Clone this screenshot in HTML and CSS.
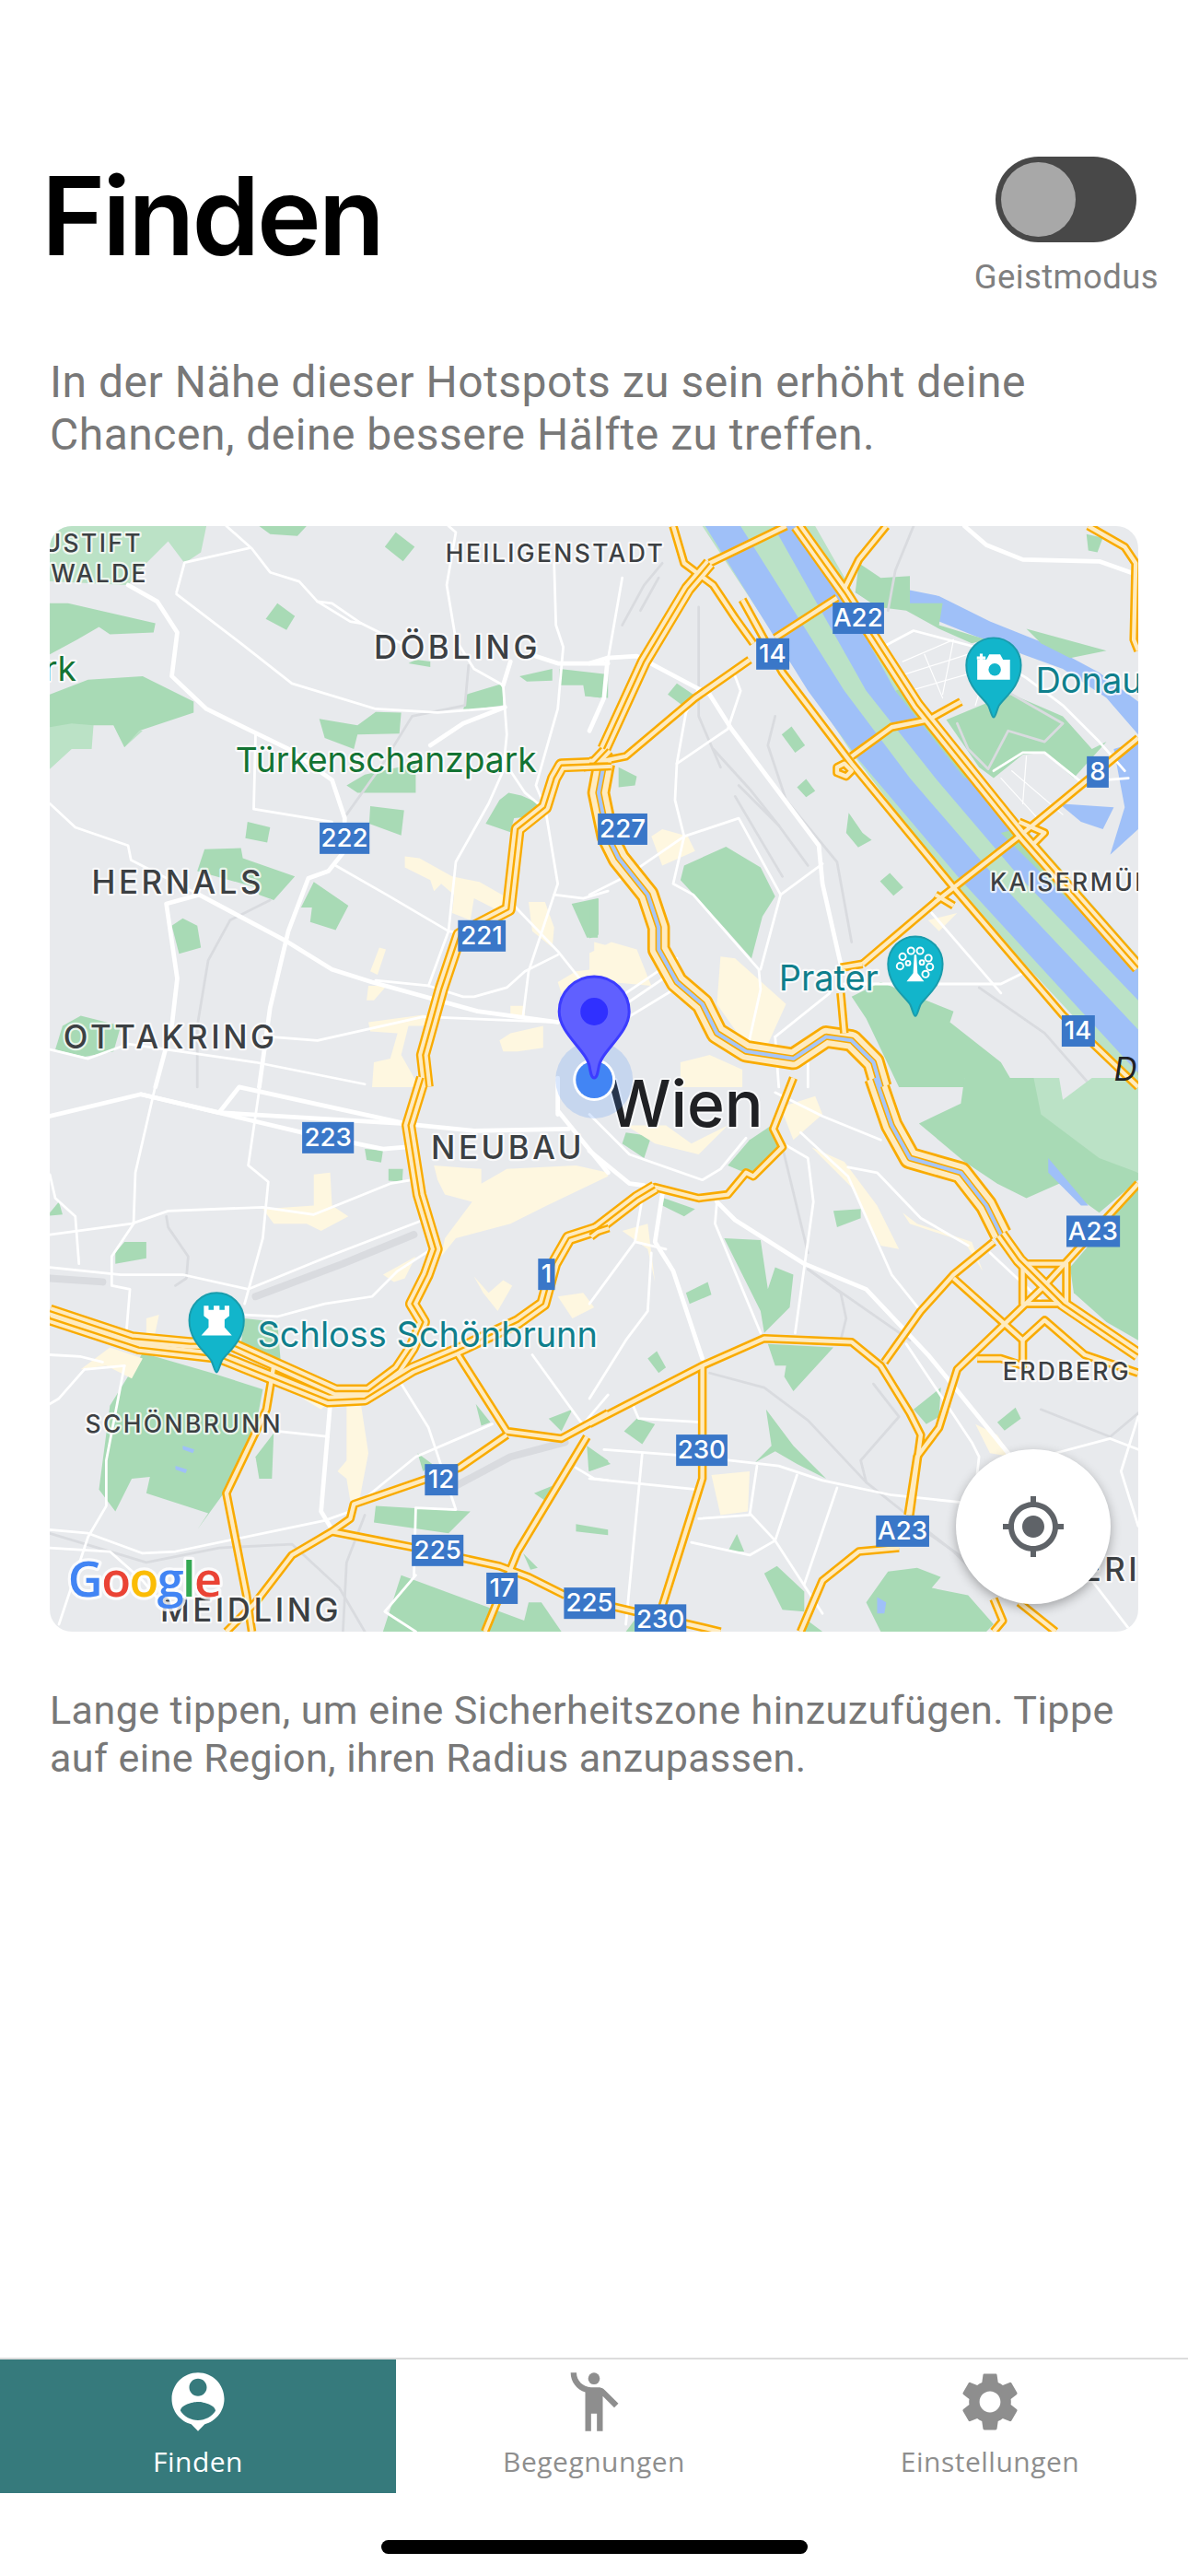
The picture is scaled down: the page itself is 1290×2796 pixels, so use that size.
FILE: index.html
```html
<!DOCTYPE html>
<html lang="de">
<head>
    <meta charset="UTF-8">
    <meta name="viewport" content="width=device-width, initial-scale=1.0">
    <title>Finden</title>
    <link rel="stylesheet" href="styles.css">
</head>
<body>
<div class="screen">
    <header class="top">
        <h1>Finden</h1>
        <div class="ghost">
            <div class="toggle"><span class="knob"></span></div>
            <span class="ghost-label">Geistmodus</span>
        </div>
    </header>
    <p class="intro">In der Nähe dieser Hotspots zu sein erhöht deine Chancen, deine bessere Hälfte zu treffen.</p>

    <div class="map">
        <svg class="map-svg" viewBox="35 28 2989 3035" width="1182" height="1200" xmlns="http://www.w3.org/2000/svg">
            <defs>
                <path id="poi" d="M0 143C-5 143-8 125-14 112C-25 92-75 60-75 0A75 75 0 1 1 75 0C75 60 25 92 14 112C8 125 5 143 0 143Z"/>
                <g id="hw-single">
                    <!-- north west -->
                    <path d="M1568 680L1500 690"/>
                    <path d="M650 2333L630 2453L520 2683L575 2963L590 3063"/>
                    <g transform="translate(1517 0)">
                        <path d="M420 230L530 430L720 680L1000 1020L1300 1370L1507 1568"/>
                        <path d="M230 28L260 130L340 190L400 280L450 350"/>
                        <path d="M0 680L100 660L290 500L440 395"/>
                        <path d="M510 335L680 225"/>
                        <path d="M700 200L740 120L815 28"/>
                        <path d="M720 660L830 580L930 560L1020 510"/>
                        <path d="M680 690L700 680L720 700L705 715L680 705Z"/>
                        <path d="M750 1230L950 1060L1180 880L1507 610"/>
                        <path d="M330 130L540 28"/>
                        <path d="M1370 28L1470 85L1500 130L1495 340L1507 370"/>
                        <path d="M690 1310L700 1420"/>
                        <path d="M690 1240L750 1230"/>
                        <path d="M950 1040L1000 1070M1180 840L1250 870L1220 900"/>
                    </g>
                    <g transform="translate(0 1543)">
                        <path d="M1510 985L1320 1300L1230 1520"/>
                        <path d="M810 1245L1040 1290L1270 1340L1350 1370L1450 1420"/>
                        <path d="M1290 980L1160 1070L870 1170L860 1210L810 1245L700 1310L600 1440L520 1520"/>
                        <path d="M1150 750L1290 970L1440 990L1568 920"/>
                    </g>
                    <g transform="translate(1517 1543)">
                        <path d="M0 950L310 790L480 715L720 725L800 790L880 920L910 980L880 1200"/>
                        <path d="M310 790L310 1100L200 1450"/>
                        <path d="M810 780L910 640L1000 540L1110 450"/>
                        <path d="M1000 550L1190 720L1250 665L1360 760L1507 810"/>
                        <path d="M1507 290L1250 570L1010 800L960 960L900 1040L875 1200"/>
                        <path d="M850 1290L740 1300L640 1380L580 1520"/>
                        <path d="M1110 1430L1135 1490L1110 1520M1180 1440L1280 1520"/>
                        <path d="M1065 770L1130 770L1190 790L1190 720"/>
                        <path d="M1190 510H1310V620H1190Z"/>
                        <path d="M60 1450L360 1520"/>
                        <path d="M0 430L130 330L180 300L300 330L380 320L430 260L450 270L530 190L505 140L560 0"/>
                    </g>
                </g>
                <g id="hw-double">
                    <path d="M1568 680L1440 685L1420 720L1395 800L1320 860L1295 1080L1160 1150L1110 1300L1060 1480L1070 1568"/>
                    <path d="M1568 640L1530 680"/>
                    <g transform="translate(1517 0)">
                        <path d="M570 28L700 210L900 520L1190 880L1507 1240"/>
                        <path d="M40 640L150 400L270 200L330 130"/>
                        <path d="M0 680L60 680"/>
                    </g>
                    <g transform="translate(0 1543)">
                        <path d="M35 640L260 715L420 730L530 730L820 860L910 860L990 800L1030 740L1060 670L1030 620L1070 540L1095 470L1050 320L1020 130L1060 0"/>
                        <path d="M35 660L280 740L500 765L800 885L900 880L1030 800L1150 750L1320 670L1390 620L1420 510L1460 440L1568 405"/>
                    </g>
                    <g transform="translate(1517 1543)">
                        <path d="M0 430L130 330L180 300"/>
                        <path d="M1130 430L1180 500L1300 620L1507 760"/>
                    </g>
                </g>
                <g id="hw-canal">
                    <g transform="translate(1517 0)">
                        <path d="M40 680L25 760L50 880L80 940L160 1040L190 1130L190 1190L240 1280L310 1340L350 1420L430 1470L560 1490L650 1430L720 1440L780 1500L800 1568"/>
                    </g>
                    <g transform="translate(1517 1543)">
                        <path d="M785 0L830 130L880 220L1020 260L1090 350L1130 430"/>
                    </g>
                </g>
            </defs>

            <rect class="land" x="35" y="28" width="2989" height="3035"/>

            <!-- north west -->
            <g>
                <g class="park-light">
                    <path d="M35 28H465L450 100L405 130L360 70L300 130L250 190L35 180Z"/>
                    <path d="M35 580L95 510L155 575L150 640L95 640L35 695Z"/>
                    <path d="M210 575L290 590L240 635Z"/>
                </g>
                <g class="park">
                    <path d="M610 28H740L715 55L640 50Z"/>
                    <path d="M985 45L1037 85L1005 125L955 85Z"/>
                    <path d="M660 240L708 275L685 313L628 283Z"/>
                    <path d="M85 240L325 295L320 320L200 325L170 305L110 340L35 380V240Z"/>
                    <path d="M35 490L140 450L290 440L430 510V540L280 590L240 635L210 575L155 575L95 570L35 580Z"/>
                    <path d="M775 557L880 575L930 538L1000 540L995 598L880 600L870 640L790 610Z"/>
                    <path d="M1325 440L1415 420V452L1345 455Z"/>
                    <path d="M1435 420L1568 435V500L1505 495L1500 465H1435Z"/>
                    <path d="M1180 490L1280 460V520L1170 535Z"/>
                    <path d="M850 740L900 710L1040 680V760H880Z"/>
                    <path d="M915 797L1008 808L1000 877L912 845Z"/>
                    <path d="M1270 780L1295 760L1330 768L1380 790L1370 825L1310 830L1300 868L1232 845Z"/>
                    <path d="M578 840L640 855L632 897L572 885Z"/>
                    <path d="M460 915L560 912L565 940L708 990L650 1055L610 1040L600 1020L440 975Z"/>
                    <path d="M760 1005L855 1070L820 1137L750 1115L755 1075L725 1075Z"/>
                    <path d="M370 1125L400 1105L440 1125L450 1185L390 1202Z"/>
                    <path d="M1468 1065L1540 1050V1158H1510Z"/>
                    <path d="M50 1465L70 1400L120 1372L230 1400L210 1470L130 1485Z"/>
                    <path d="M1040 395L1080 400V415L1020 405Z"/>
                </g>
                <g class="urban">
                    <path d="M1010 935L1050 940L1140 990L1215 1005L1285 1045L1270 1085L1200 1050L1190 1110L1140 1090L1145 1040L1110 1010L1090 1030L1080 1000L1010 965Z"/>
                    <path d="M1350 1060H1395L1420 1130L1415 1185L1360 1140Z"/>
                    <path d="M940 1185L958 1190L935 1260L915 1250Z"/>
                    <path d="M1530 1170L1568 1180V1260L1530 1240Z"/>
                    <path d="M1430 1280L1480 1250L1568 1240V1330L1500 1300L1440 1310Z"/>
                    <path d="M910 1290H960L925 1330H905Z"/>
                    <path d="M910 1390L1060 1370L1100 1380V1400H1020L1000 1480L1050 1568H920L925 1500L970 1490L990 1420L915 1415Z"/>
                    <path d="M1270 1440L1300 1420L1390 1400V1460L1320 1470H1280Z"/>
                    <path d="M1300 1345H1340V1380L1300 1370Z"/>
                </g>
                <g class="rail">
                    <path d="M1185 410L1175 520L1030 550L950 680L850 820"/>
                    <path d="M640 1055L530 1110L470 1220L440 1400V1568"/>
                </g>
                <g class="road">
                    <path d="M520 28L590 90L640 155L720 180L770 235L860 290L890 295"/>
                    <path d="M770 235L810 240L890 295L1000 350"/>
                    <path d="M585 88L405 128L383 210"/>
                    <path d="M383 215L560 350L700 460L930 530L1100 540L1285 525"/>
                    <path d="M35 790L105 855L250 905L258 945L445 1040"/>
                    <path d="M600 600L595 805L810 840"/>
                    <path d="M1130 28L1150 45L1125 190L1150 340L1200 420L1280 465L1290 600L1280 700L1240 790L1150 950L1130 1140L1075 1290"/>
                    <path d="M1420 130L1425 300L1445 360L1430 530L1370 740L1395 800L1430 1010L1420 1040L1350 1250L1335 1370"/>
                    <path d="M820 960L960 1040L1130 1140L1160 1145"/>
                    <path d="M1310 1070L1430 1195L1490 1270"/>
                    <path d="M1430 1205L1340 1250L1290 1295L1200 1320H1170L1075 1290L930 1275"/>
                    <path d="M640 1430L770 1440L1060 1375L1430 1390"/>
                    <path d="M35 1465L140 1490L250 1450L600 1500L900 1560"/>
                    <path d="M1300 700L1340 760L1400 810"/>
                    <path d="M1420 1040L1500 1050L1568 1030"/>
                </g>
                <g class="road-major">
                    <path d="M250 190L330 235L385 320L370 440L465 530L690 640L810 725L845 830L840 925L800 975L745 995L690 1140L640 1350L610 1568"/>
                    <path d="M445 1040L680 1165L810 1245L920 1280L1210 1360L1430 1390"/>
                    <path d="M445 1040L355 1065L385 1270L370 1400L325 1568"/>
                    <path d="M1080 630L1170 570L1285 525M1300 400L1280 465"/>
                    <path d="M1370 385L1430 405H1568"/>
                </g>
            </g>

            <!-- north east -->
            <g transform="translate(1517 0)">
                <path class="park-light" d="M310 28H620L900 520L1507 1210V1565L1000 1020L720 650Z"/>
                <g class="water">
                    <path d="M318 28H415L700 480L880 720L1130 1010L1507 1410V1530L1020 1000L740 670L600 480Z"/>
                    <path d="M505 28H590L840 480L1050 720L1230 930L1507 1240V1330L1180 990L950 720L760 480Z"/>
                    <path d="M730 210L790 170L860 200L960 220L1100 290L1250 350L1400 430L1507 510V600L1420 500L1300 420L1190 380L1060 330L960 290L870 240L780 240Z"/>
                    <path d="M1440 640L1507 620V860L1430 930L1470 800Z"/>
                    <path d="M1290 790L1440 800L1410 860L1350 840Z"/>
                    <path d="M1150 520L1200 540L1250 610L1220 610L1160 560Z"/>
                </g>
                <g class="park">
                    <path d="M740 130L800 170L880 165V240L970 240L960 300L1090 340L1050 350L960 310L870 260L790 250L730 210Z"/>
                    <path d="M1200 310L1420 370L1320 390L1240 350Z"/>
                    <path d="M980 560L1100 510L1160 490L1300 550L1380 640L1420 620L1330 720L1250 650L1190 655L1110 720L1070 690Z"/>
                    <path d="M1365 50L1410 60L1395 100L1370 95Z"/>
                    <path d="M555 578L592 630L565 650L528 600Z"/>
                    <path d="M595 722L620 755L595 772L570 745Z"/>
                    <path d="M825 980L862 1020L835 1043L798 1003Z"/>
                    <path d="M712 815L750 870L775 890L738 910L705 870Z"/>
                    <path d="M375 908L470 965L510 1045L475 1100L445 1215L370 1130L250 1000L260 960Z"/>
                    <path d="M80 690L130 715L125 740L80 745Z"/>
                    <path d="M240 460L285 490L255 520L215 490Z"/>
                    <path d="M720 1320L800 1280L1000 1360L990 1390L1130 1500L1170 1568H850L760 1380Z"/>
                    <path d="M0 1060L25 1050V1150L0 1160Z"/>
                    <path d="M0 430L35 440L30 500L0 495Z"/>
                    <path d="M840 480L870 470L1060 720L1030 720Z"/>
                    <path d="M1130 870L1170 860L1507 1230V1245Z"/>
                </g>
                <g class="urban">
                    <path d="M200 860L270 880L290 920L200 960L170 880Z"/>
                    <path d="M0 1200L60 1170L130 1190L170 1290L60 1280L0 1270Z"/>
                    <path d="M360 1210L400 1215L540 1340L490 1450L420 1440L350 1340Z"/>
                    <path d="M930 1110L1010 1090L960 1140Z"/>
                    <path d="M250 1500L330 1480L420 1520V1568H250Z"/>
                </g>
                <g class="rail">
                    <path d="M340 640L440 750L520 850L600 960"/>
                    <path d="M410 740L520 850M400 770L530 990"/>
                    <path d="M300 250V550L360 690"/>
                    <path d="M510 550L490 630L540 780L680 950L720 1170"/>
                    <path d="M90 300L150 190L200 130M140 260L190 170"/>
                    <path d="M890 28L840 150L820 260"/>
                    <path d="M1070 1295L1250 1420L1380 1568"/>
                    <path d="M1010 570L1040 640L1095 695L1150 590L1250 620L1300 570L1160 490"/>
                </g>
                <g class="road">
                    <path d="M300 475L265 540L240 680L235 780L260 880L230 1010L285 1040L465 1245L470 1300L430 1480"/>
                    <path d="M240 680L380 585L415 480L400 440"/>
                    <path d="M0 1040L100 990L260 880L410 830L525 1040L470 1245"/>
                    <path d="M525 1040L640 955"/>
                    <path d="M700 1285H1130L1190 1255"/>
                    <path d="M940 1090L1130 1310"/>
                    <path d="M815 355L890 315L1060 360L1200 445L1300 520L1400 620L1470 700"/>
                    <path d="M1110 700L1190 650H1250L1350 730L1480 720"/>
                    <path d="M100 1310L240 1215M100 1340L240 1245M100 1380L240 1295"/>
                    <path d="M90 170L50 400M510 1430L520 1568M600 1470L600 1568"/>
                    <path d="M510 1430L660 1310"/>
                </g>
                <g class="road-thin">
                    <path d="M860 400L1000 340M850 440L1040 380M880 480L1090 420M920 380L970 500M1000 340L970 490M1090 420L1060 520"/>
                    <path d="M1130 720L1240 840M1160 700L1300 820M1200 660L1190 790"/>
                </g>
                <g class="road-major">
                    <path d="M1030 28L1090 80L1190 120L1400 125L1500 160"/>
                    <path d="M0 405L50 390L130 385L300 475L330 490L390 585L630 905L640 1010L690 1230"/>
                    <path d="M50 390L40 500L0 590"/>
                </g>
            </g>

            <!-- south west -->
            <g transform="translate(0 1543)">
                <g class="park">
                    <path d="M290 755L480 810L620 855L600 960L570 1040L520 1130L440 1240L470 1195L300 1140L310 1095L260 1100L215 1190L170 1130L200 900Z"/>
                    <path d="M600 1040L650 975L645 1100L610 1100Z"/>
                    <path d="M570 660L660 670L670 790L560 730Z"/>
                    <path d="M215 480L240 450H300V495L215 510Z"/>
                    <path d="M900 195L950 200L945 232L905 225Z"/>
                    <path d="M965 250H1005L1003 285L965 282Z"/>
                    <path d="M35 370L60 340L70 375L35 378Z"/>
                    <path d="M1205 895L1245 945L1220 955Z"/>
                    <path d="M1405 935L1470 910L1440 970Z"/>
                    <path d="M1045 1030L1085 1060L1060 1080Z"/>
                    <path d="M930 1175L1190 1190L1130 1250L925 1220Z"/>
                    <path d="M1000 1365L1230 1450L1420 1520H950Z"/>
                    <path d="M1510 1010L1568 1050V1060L1515 1080Z"/>
                    <path d="M1365 1140L1415 1120L1395 1160Z"/>
                    <path d="M1480 1225L1568 1240V1255L1480 1245Z"/>
                    <path d="M1335 1305L1375 1345L1355 1350Z"/>
                    <path d="M1350 1440H1385L1440 1520H1330Z"/>
                </g>
                <g class="water">
                    <path d="M400 1010L432 1020L428 1030L400 1020Z"/>
                    <path d="M380 1065L412 1075L408 1085L380 1075Z"/>
                </g>
                <g class="urban">
                    <path d="M1090 240L1220 250V290L1290 250L1480 240L1568 260V270L1400 350L1300 400L1150 440L1110 490L1120 440L1195 340L1120 320L1100 280Z"/>
                    <path d="M760 265L805 260L810 350L855 380L780 420L740 400H650L620 360L760 350Z"/>
                    <path d="M1200 545L1240 590L1280 555L1305 570L1265 640L1225 590Z"/>
                    <path d="M1430 600L1500 590L1530 630L1470 660Z"/>
                    <path d="M850 900H890L910 1030L885 1160H860L850 1100L825 1080L850 1050Z"/>
                    <path d="M120 800L200 740L290 770L260 825L190 790Z"/>
                    <path d="M300 660L335 650L320 720H300Z"/>
                    <path d="M730 880L800 890L780 910Z"/>
                    <path d="M950 540L1040 490L1010 550L980 560Z"/>
                </g>
                <g class="rail rail-wide">
                    <path d="M600 600L840 510L1035 430"/>
                    <path d="M35 550L180 560"/>
                    <path d="M1150 1120L1300 1040L1450 1000"/>
                </g>
                <g class="rail">
                    <path d="M35 1250L300 1330L500 1290L700 1280L830 1400L900 1520"/>
                    <path d="M355 380L360 410L415 490L410 550L380 570"/>
                    <path d="M840 1520L850 1330L900 1200"/>
                </g>
                <g class="road">
                    <path d="M330 0L270 260L265 400L205 490V570L255 580L245 700"/>
                    <path d="M615 0L580 240L635 285L620 440L570 620"/>
                    <path d="M35 430L260 400L360 365L620 355L760 375L970 290L1030 280"/>
                    <path d="M105 380L115 510M35 265L50 330L105 380"/>
                    <path d="M35 520L230 540H400L580 580L800 490L1060 390"/>
                    <path d="M570 650L660 655L790 620L920 600L990 530L1075 475"/>
                    <path d="M35 895L60 880L130 800L240 790"/>
                    <path d="M35 760L120 765L180 780"/>
                    <path d="M240 790L190 1050V1175L140 1260L60 1500"/>
                    <path d="M665 970L800 985"/>
                    <path d="M35 1240L140 1250L290 1305L380 1300L790 1215L860 1190"/>
                    <path d="M35 1290L200 1300L290 1380L340 1440"/>
                    <path d="M985 815L1075 960L1150 1185L1040 1180L1035 1370"/>
                    <path d="M905 1150L1040 1040L1250 950"/>
                    <path d="M1360 760L1490 940L1500 950L1568 870"/>
                    <path d="M1480 1070L1530 1100L1568 1105"/>
                    <path d="M1040 1365L955 1465L1040 1520"/>
                </g>
                <g class="road-major">
                    <path d="M35 105L285 45L500 95L1000 125L1200 145L1460 140"/>
                    <path d="M285 45L560 110L730 150L950 195L1010 190"/>
                    <path d="M500 95L555 25L1010 125"/>
                    <path d="M805 895L780 1190L810 1240"/>
                    <path d="M1430 90L1568 260M1430 0V100"/>
                </g>
            </g>

            <!-- south east -->
            <g transform="translate(1517 1543)">
                <g class="park-light">
                    <path d="M1030 0H1290L1300 60L1380 0H1507V260L1230 200L1030 120Z"/>
                </g>
                <g class="park">
                    <path d="M905 125L1020 70L1030 0H1220L1240 100L1400 220L1507 260V280L1400 370L1290 290L1200 330L1120 290L1030 230Z"/>
                    <path d="M1320 520L1507 300V720L1420 670L1330 590Z"/>
                    <path d="M370 440L470 445L490 580L510 520L560 540L550 630L480 700L470 640Z"/>
                    <path d="M490 730L670 740L560 860L535 820L540 790L510 790Z"/>
                    <path d="M100 150L170 160L150 220L90 180Z"/>
                    <path d="M205 330L290 360L260 380L200 350Z"/>
                    <path d="M670 365L745 360V385L680 410Z"/>
                    <path d="M265 590L325 560L335 595L275 620Z"/>
                    <path d="M160 770L185 750L210 795L190 810Z"/>
                    <path d="M890 910L965 850L960 930L925 950Z"/>
                    <path d="M1120 945L1170 905L1185 935L1140 968Z"/>
                    <path d="M95 970L130 935L180 950L145 1005Z"/>
                    <path d="M485 910L560 1010L650 1100L570 1060L510 1025L455 1055L500 1010Z"/>
                    <path d="M380 1300L405 1252L425 1300Z"/>
                    <path d="M0 1030L35 1040L58 1060L0 1080Z"/>
                    <path d="M820 1355L900 1345L965 1370L940 1400L1040 1420L1110 1500L1090 1520H800L760 1440Z"/>
                    <path d="M480 1360L515 1340L590 1410V1465L530 1460Z"/>
                    <path d="M100 1520L130 1480V1520Z"/>
                    <path d="M600 1490L640 1520H590Z"/>
                    <path d="M380 240L440 170L500 130L530 190L450 270Z"/>
                </g>
                <g class="water">
                    <path d="M1260 220L1370 350H1350L1260 260Z"/>
                    <path d="M790 1425L815 1440L810 1470H790Z"/>
                </g>
                <g class="urban">
                    <path d="M60 130H210L280 180L380 130L300 210L180 180L100 130Z"/>
                    <path d="M525 80L620 50L640 100L560 170Z"/>
                    <path d="M610 190L700 230L790 350L850 470L800 460L720 300Z"/>
                    <path d="M860 370L900 400L1050 450L1080 530L1030 450L880 400Z"/>
                    <path d="M335 1090L440 1080L435 1190L360 1200Z"/>
                    <path d="M1060 950L1120 980L1160 1040L1100 1030Z"/>
                    <path d="M90 420L160 400L180 560L160 470Z"/>
                </g>
                <g class="rail">
                    <path d="M330 810L480 850L600 940L760 1110L1000 1300L1100 1400"/>
                    <path d="M530 190L600 480M600 525L690 590L705 660L690 720"/>
                    <path d="M600 525L880 720M780 840L850 930L745 1050L760 1110"/>
                    <path d="M1240 910L1430 985L1507 920M930 1250L1130 1390"/>
                </g>
                <g class="road">
                    <path d="M0 100L110 210L310 280L360 250L430 165"/>
                    <path d="M350 340L345 400L470 700"/>
                    <path d="M510 40L640 105L800 170"/>
                    <path d="M540 185L600 220L615 340L565 700"/>
                    <path d="M200 320L180 450L230 530L310 770"/>
                    <path d="M150 300L125 450L0 620"/>
                    <path d="M125 450L210 470"/>
                    <path d="M170 480L160 640L100 720L0 880"/>
                    <path d="M710 245L790 260L910 385L1040 460"/>
                    <path d="M580 150L710 270L830 540L910 640"/>
                    <path d="M870 730L1050 1000L1070 1040L1060 1130"/>
                    <path d="M1100 480L1250 620"/>
                    <path d="M40 1020L300 1040L520 1065L640 1105L830 1145L1020 1165"/>
                    <path d="M145 1030L100 1500"/>
                    <path d="M0 1100L300 1130"/>
                    <path d="M460 1065L440 1200L300 1210"/>
                    <path d="M440 1195L510 1270L640 1470"/>
                    <path d="M570 1090L510 1270L440 1310L280 1275"/>
                    <path d="M680 1125L590 1390"/>
                    <path d="M1280 1030L1430 990L1507 1020"/>
                    <path d="M1507 930L1460 1080L1507 1230"/>
                    <path d="M1380 1380L1480 1510"/>
                    <path d="M120 900L135 935L305 945"/>
                </g>
                <g class="road-major">
                    <path d="M0 200L110 290L150 295"/>
                    <path d="M350 340L400 390L590 510L760 580L930 760L1150 1030"/>
                    <path d="M200 320L180 450L230 530L310 770"/>
                </g>
            </g>

            <!-- motorways, drawn over all the ground layers -->
            <use href="#hw-canal" class="hw-base-wide"/>
            <use href="#hw-canal" class="hw-fill-wide"/>
            <use href="#hw-canal" class="hw-mid-wide"/>
            <use href="#hw-canal" class="hw-river"/>
            <use href="#hw-single" class="hw-base"/>
            <use href="#hw-double" class="hw-base-double"/>
            <use href="#hw-single" class="hw-fill"/>
            <use href="#hw-double" class="hw-fill-double"/>
            <use href="#hw-double" class="hw-mid"/>

            <!-- district labels -->
            <g class="lbl lbl-s">
                <text x="290" y="100" text-anchor="end">NEUSTIFT</text>
                <text x="305" y="182" text-anchor="end">AM WALDE</text>
                <text x="1122" y="127">HEILIGENSTADT</text>
                <text x="2617" y="1030">KAISERMÜHLEN</text>
                <text x="132" y="2516">SCHÖNBRUNN</text>
                <text x="2652" y="2373">ERDBERG</text>
            </g>
            <g class="lbl lbl-m">
                <text x="925" y="392">DÖBLING</text>
                <text x="150" y="1037">HERNALS</text>
                <text x="72" y="1463">OTTAKRING</text>
                <text x="1082" y="1765">NEUBAU</text>
                <text x="338" y="3035">MEIDLING</text>
                <text x="2592" y="2923">SIMMERING</text>
            </g>
            <g class="lbl-park">
                <text x="108" y="452" text-anchor="end">Park</text>
                <text x="545" y="703">Türkenschanzpark</text>
            </g>
            <g class="lbl-poi">
                <text x="605" y="2281">Schloss Schönbrunn</text>
                <text x="2037" y="1302">Prater</text>
                <text x="2742" y="485">Donaupark</text>
            </g>
            <text class="lbl-water" x="2957" y="1550">Donau</text>
            <text class="lbl-city" x="1564" y="1676">Wien</text>

            <!-- road shields -->
            <g class="shields">
                <g><rect x="776" y="842" width="137" height="86"/><text x="844" y="908">222</text></g>
                <g><rect x="1156" y="1110" width="131" height="86"/><text x="1221" y="1176">221</text></g>
                <g><rect x="1540" y="817" width="136" height="86"/><text x="1608" y="883">227</text></g>
                <g><rect x="1975" y="336" width="91" height="86"/><text x="2020" y="402">14</text></g>
                <g><rect x="2185" y="238" width="141" height="86"/><text x="2255" y="304">A22</text></g>
                <g><rect x="2883" y="660" width="60" height="86"/><text x="2913" y="726">8</text></g>
                <g><rect x="2814" y="1371" width="91" height="86"/><text x="2859" y="1437">14</text></g>
                <g><rect x="728" y="1664" width="142" height="86"/><text x="799" y="1730">223</text></g>
                <g><rect x="1376" y="2039" width="46" height="86"/><text x="1399" y="2105">1</text></g>
                <g><rect x="1065" y="2603" width="91" height="86"/><text x="1110" y="2669">12</text></g>
                <g><rect x="1029" y="2797" width="142" height="86"/><text x="1100" y="2863">225</text></g>
                <g><rect x="1234" y="2901" width="86" height="86"/><text x="1277" y="2967">17</text></g>
                <g><rect x="1447" y="2942" width="141" height="86"/><text x="1517" y="3008">225</text></g>
                <g><rect x="1755" y="2522" width="141" height="86"/><text x="1825" y="2588">230</text></g>
                <g><rect x="1641" y="2988" width="142" height="86"/><text x="1712" y="3054">230</text></g>
                <g><rect x="2827" y="1921" width="147" height="86"/><text x="2900" y="1987">A23</text></g>
                <g><rect x="2304" y="2744" width="146" height="86"/><text x="2377" y="2810">A23</text></g>
            </g>

            <!-- teal places -->
            <g transform="translate(2627 410)">
                <use href="#poi" class="poi-pin"/>
                <path class="poi-glyph" d="M-45-15H-20L-12-30H18L26-15H45V40H-45Z"/>
                <circle class="poi-hole" cx="3" cy="12" r="17"/>
                <path class="poi-glyph" d="M-38-32H-30V-24H-22V-16H-30V-8H-38V-16H-46V-24H-38Z"/>
            </g>
            <g transform="translate(2412 1230)">
                <use href="#poi" class="poi-pin"/>
                <g class="poi-ring">
                    <circle cx="-35" cy="-20" r="9"/><circle cx="-12" cy="-36" r="9"/><circle cx="13" cy="-36" r="9"/>
                    <circle cx="36" cy="-16" r="9"/><circle cx="40" cy="8" r="9"/><circle cx="-42" cy="6" r="9"/>
                    <circle cx="28" cy="28" r="9"/><circle cx="-20" cy="-2" r="6"/><circle cx="18" cy="-4" r="6"/>
                </g>
                <path class="poi-glyph" d="M-3-25H3L6 25L24 48H-24L-6 25Z"/>
            </g>
            <g transform="translate(493 2208)">
                <use href="#poi" class="poi-pin"/>
                <path class="poi-glyph" d="M-35-40H-22V-28H-8V-40H8V-28H22V-40H35V-12L22-2V20L42 42H-42L-22 20V-2L-35-12Z"/>
            </g>

            <!-- current position and the hotspot pin -->
            <g transform="translate(1530 1548) scale(2.529)">
                <circle class="me-halo" r="42"/>
                <circle class="me-ring" r="23"/>
                <circle class="me-dot" r="20"/>
                <path class="pin" d="M0-2C-3-2-4-8-5-14C-8-32-38-50-38-74C-38-95-21-112 0-112C21-112 38-95 38-74C38-50 8-32 5-14C4-8 3-2 0-2Z"/>
                <circle class="pin-hole" cy="-74" r="15"/>
            </g>

            <text class="google" x="85" y="2968"><tspan class="g-blue">G</tspan><tspan class="g-red">o</tspan><tspan class="g-yellow">o</tspan><tspan class="g-blue">g</tspan><tspan class="g-green">l</tspan><tspan class="g-red">e</tspan></text>
        </svg>
        <button class="locate" type="button">
            <svg viewBox="0 0 24 24" width="72" height="72"><path d="M12 8c-2.21 0-4 1.79-4 4s1.79 4 4 4 4-1.79 4-4-1.79-4-4-4zm8.94 3c-.46-4.17-3.77-7.48-7.94-7.94V1h-2v2.06C6.83 3.52 3.52 6.83 3.06 11H1v2h2.06c.46 4.17 3.77 7.48 7.94 7.94V23h2v-2.06c4.17-.46 7.48-3.77 7.94-7.94H23v-2h-2.06zM12 19c-3.87 0-7-3.13-7-7s3.13-7 7-7 7 3.13 7 7-3.13 7-7 7z"/></svg>
        </button>
    </div>

    <p class="note">Lange tippen, um eine Sicherheitszone hinzuzufügen. Tippe auf eine Region, ihren Radius anzupassen.</p>

    <nav class="tabs">
        <a class="tab active">
            <svg viewBox="0 0 24 24" width="76" height="76"><path d="M12 2c-4.97 0-9 4.03-9 9 0 4.17 2.84 7.67 6.69 8.69L12 22l2.31-2.31C18.16 18.67 21 15.17 21 11c0-4.97-4.03-9-9-9zm0 2c1.66 0 3 1.34 3 3s-1.34 3-3 3-3-1.34-3-3 1.34-3 3-3zm0 14.3c-2.5 0-4.71-1.28-6-3.22.03-1.99 4-3.08 6-3.08 1.99 0 5.97 1.09 6 3.08-1.29 1.94-3.5 3.22-6 3.22z"/></svg>
            <span>Finden</span>
        </a>
        <a class="tab">
            <svg viewBox="0 0 24 24" width="76" height="76"><circle cx="12" cy="4" r="2"/><path d="M15.89 8.11C15.5 7.72 14.83 7 13.53 7h-2.54C8.24 6.99 6 4.75 6 2H4c0 3.16 2.11 5.84 5 6.71V22h2v-6h2v6h2v-11.95L18.95 14l1.41-1.41-4.47-4.48z"/></svg>
            <span>Begegnungen</span>
        </a>
        <a class="tab">
            <svg viewBox="0 0 24 24" width="76" height="76"><path d="M19.14 12.94c.04-.3.06-.61.06-.94 0-.32-.02-.64-.07-.94l2.03-1.58c.18-.14.23-.41.12-.61l-1.92-3.32c-.12-.22-.37-.29-.59-.22l-2.39.96c-.5-.38-1.03-.7-1.62-.94l-.36-2.54c-.04-.24-.24-.41-.48-.41h-3.84c-.24 0-.43.17-.47.41l-.36 2.54c-.59.24-1.13.57-1.62.94l-2.39-.96c-.22-.08-.47 0-.59.22L2.74 8.87c-.12.21-.08.47.12.61l2.03 1.58c-.05.3-.09.63-.09.94s.02.64.07.94l-2.03 1.58c-.18.14-.23.41-.12.61l1.92 3.32c.12.22.37.29.59.22l2.39-.96c.5.38 1.03.7 1.62.94l.36 2.54c.05.24.24.41.48.41h3.84c.24 0 .44-.17.47-.41l.36-2.54c.59-.24 1.13-.56 1.62-.94l2.39.96c.22.08.47 0 .59-.22l1.92-3.32c.12-.22.07-.47-.12-.61l-2.01-1.58zM12 15.6c-1.98 0-3.6-1.62-3.6-3.6s1.62-3.6 3.6-3.6 3.6 1.62 3.6 3.6-1.62 3.6-3.6 3.6z"/></svg>
            <span>Einstellungen</span>
        </a>
    </nav>
    <div class="home-bar"><span></span></div>
</div>
</body>
</html>
```

FILE: styles.css
```css
*{
    box-sizing: border-box;
}

html,body{
    margin: 0;
    padding: 0;
    background-color: white;
}

.screen{
    width: 1290px;
    height: 2796px;
    display: flex;
    flex-direction: column;
    font-family: Roboto, "Liberation Sans", sans-serif;
}

.top{
    display: flex;
    justify-content: space-between;
    align-items: flex-start;
    padding: 170px 32px 0 45px;
    height: 330px;
}

.top h1{
    margin: 0;
    font-family: Inter, "Liberation Sans", sans-serif;
    font-size: 118px;
    line-height: 128px;
    font-weight: 600;
    letter-spacing: -3px;
    color: black;
}

.ghost{
    display: flex;
    flex-direction: column;
    align-items: center;
    gap: 17px;
}

.toggle{
    width: 153px;
    height: 93px;
    padding: 6px;
    border-radius: 47px;
    background-color: #484848;
}

.knob{
    display: block;
    width: 81px;
    height: 81px;
    border-radius: 50%;
    background-color: #a8a8a8;
}

.ghost-label{
    font-size: 36.5px;
    line-height: 42px;
    letter-spacing: 0.4px;
    color: #808080;
}

.intro{
    margin: 56px 54px 0;
    font-size: 48px;
    line-height: 57px;
    letter-spacing: 0.5px;
    color: #787878;
}

.map{
    position: relative;
    width: 1182px;
    height: 1200px;
    margin: 71px 54px 0;
    border-radius: 24px;
    overflow: hidden;
}

.map-svg{
    display: block;
}

.locate{
    position: absolute;
    right: 30px;
    bottom: 30px;
    width: 168px;
    height: 168px;
    padding: 0;
    border: none;
    border-radius: 50%;
    background-color: white;
    box-shadow: 0 4px 12px rgba(0, 0, 0, 0.3);
    display: flex;
    align-items: center;
    justify-content: center;
}

.locate svg{
    fill: #5f6368;
}

.note{
    margin: 59px 54px 0;
    font-size: 43px;
    line-height: 52px;
    letter-spacing: 0.45px;
    color: #787878;
}

.tabs{
    display: flex;
    margin-top: auto;
    height: 147px;
    border-top: 2px solid #dcdcdc;
}

.tab{
    flex: 1;
    display: flex;
    flex-direction: column;
    align-items: center;
    padding-top: 8px;
    color: #8e8e8e;
}

.tab svg{
    fill: #8e8e8e;
}

.tab span{
    font-family: "Open Sans", sans-serif;
    font-size: 30px;
    line-height: 36px;
    margin-top: 9px;
    letter-spacing: 0.5px;
}

.tab.active{
    background-color: #367a7c;
    color: white;
}

.tab.active svg{
    fill: white;
}

.home-bar{
    height: 90px;
    display: flex;
    justify-content: center;
    padding-top: 51px;
}

.home-bar span{
    display: block;
    width: 463px;
    height: 15px;
    border-radius: 8px;
    background-color: black;
}

/* map layers */
.land{ fill: #e8eaed; }
.park{ fill: #a8dab5; }
.park-light{ fill: #bbe2c6; }
.water{ fill: #9fc0f8; }
.urban{ fill: #fef7e0; }

.rail,.road,.road-major,.road-thin{
    fill: none;
    stroke-linejoin: round;
    stroke-linecap: round;
}
.rail{ stroke: #d9dbdf; stroke-width: 7px; }
.rail-wide{ stroke-width: 20px; }
.road{ stroke: white; stroke-width: 7px; }
.road-thin{ stroke: white; stroke-width: 3px; }
.road-major{ stroke: white; stroke-width: 12px; }

.hw-base,.hw-fill,.hw-base-double,.hw-fill-double,.hw-mid,
.hw-base-wide,.hw-fill-wide,.hw-mid-wide,.hw-river{
    fill: none;
    stroke-linejoin: round;
}
.hw-base{ stroke: #f9ab00; stroke-width: 24px; }
.hw-fill{ stroke: #feebc0; stroke-width: 11px; }
.hw-base-double{ stroke: #f9ab00; stroke-width: 38px; }
.hw-fill-double{ stroke: #feebc0; stroke-width: 26px; }
.hw-mid{ stroke: #f9ab00; stroke-width: 6px; }
.hw-base-wide{ stroke: #f9ab00; stroke-width: 62px; }
.hw-fill-wide{ stroke: #feebc0; stroke-width: 48px; }
.hw-mid-wide{ stroke: #f9ab00; stroke-width: 18px; }
.hw-river{ stroke: #a6c6fa; stroke-width: 10px; }

/* map text */
.map-svg text{
    font-family: Inter, "Liberation Sans", sans-serif;
    paint-order: stroke;
    stroke-linejoin: round;
}
.lbl{
    fill: #3c4043;
    stroke: rgba(255, 255, 255, 0.75);
    stroke-width: 11px;
    font-weight: 500;
}
.lbl-s{ font-size: 67px; letter-spacing: 6px; }
.lbl-m{ font-size: 88px; letter-spacing: 9px; }
.lbl-park{
    fill: #137333;
    stroke: rgba(255, 255, 255, 0.75);
    stroke-width: 11px;
    font-size: 94px;
}
.lbl-poi{
    fill: #0f7f8c;
    stroke: rgba(255, 255, 255, 0.8);
    stroke-width: 11px;
    font-size: 96px;
}
.lbl-water{
    fill: #202124;
    font-size: 88px;
    font-style: italic;
}
.lbl-city{
    fill: #202124;
    stroke: rgba(255, 255, 255, 0.7);
    stroke-width: 10px;
    font-size: 176px;
    font-weight: 500;
}
.shields rect{ fill: #3a77c8; }
.shields text{
    fill: white;
    font-size: 70px;
    font-weight: 500;
    text-anchor: middle;
}

.poi-pin{
    fill: #12b5cb;
    stroke: #1a9cac;
    stroke-width: 5px;
}
.poi-glyph{ fill: white; }
.poi-hole{ fill: #12b5cb; }
.poi-ring circle{
    fill: none;
    stroke: white;
    stroke-width: 5px;
}

.me-halo{ fill: rgba(66, 133, 244, 0.2); }
.me-ring{ fill: white; }
.me-dot{ fill: #4285f4; }
.pin{
    fill: #6060ff;
    stroke: #3c3cff;
    stroke-width: 3px;
}
.pin-hole{ fill: #3030ff; }

.map-svg .google{
    font-family: "Open Sans", sans-serif;
    font-size: 132px;
    font-weight: 600;
    letter-spacing: -4px;
    stroke: rgba(255, 255, 255, 0.8);
    stroke-width: 16px;
}
.g-blue{ fill: #4285f4; }
.g-red{ fill: #ea4335; }
.g-yellow{ fill: #fbbc05; }
.g-green{ fill: #34a853; }
```
